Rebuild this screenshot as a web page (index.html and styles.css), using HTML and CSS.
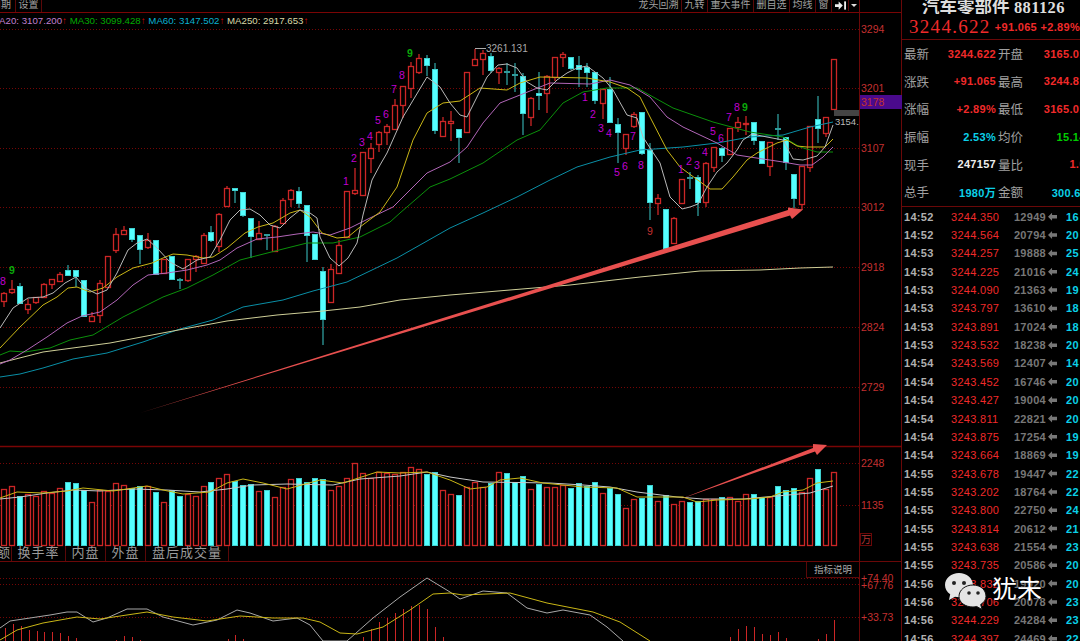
FILE: index.html
```html
<!DOCTYPE html>
<html lang="zh-CN">
<head>
    <meta charset="UTF-8">
    <title>汽车零部件 881126</title>
    <link rel="stylesheet" href="styles.css">
</head>
<body>

<div class="app">
    <div class="chart">
        <div class="toolbar">
            <div class="tool-group">
                <span class="tool tool-cut">周期</span>
                <span class="tool">设置</span>
            </div>
            <div class="tool-group">
                <span class="tool">龙头回溯</span>
                <span class="tool">九转</span>
                <span class="tool">重大事件</span>
                <span class="tool">删自选</span>
                <span class="tool">均线</span>
                <span class="tool">窗</span>
                <span class="tool tool-icon">
                    <svg width="12" height="9" viewBox="0 0 12 9"><path d="M0 3h4V0l4.500 4.500L4 9V6H0z" fill="#eee"/><rect x="10" y="0" width="2" height="9" fill="#eee"/></svg>
                </span>
                <span class="tool tool-icon tool-drop"><i class="drop-arrow"></i></span>
            </div>
        </div>

        <svg id="pricePane" class="pane pane-price" viewBox="0 13 902 433"></svg>
        <svg id="volumePane" class="pane pane-volume" viewBox="0 447 902 99"></svg>

        <div class="tabs">
            <span class="tab tab-cut">成交额</span>
            <span class="tab tab-turnover">换手率</span>
            <span class="tab">内盘</span>
            <span class="tab">外盘</span>
            <span class="tab tab-after">盘后成交量</span>
        </div>

        <svg id="macdPane" class="pane pane-macd" viewBox="0 562 902 79"></svg>

        <div class="unit-box">万</div>
        <div class="explain-box">指标说明</div>
        <div class="axis-rule"></div>
    </div>

    <div class="quote">
        <div class="quote-title">汽车零部件 <b>881126</b></div>
        <div class="quote-head">
            <span class="head-price">3244.622</span>
            <span class="head-change">+91.065</span>
            <span class="head-pct">+2.89%</span>
        </div>
        <div class="quote-grid">
            <div class="quote-row"><span class="label">最新</span><span class="val red">3244.622</span><span class="label">开盘</span><span class="val red">3165.012</span></div>
            <div class="quote-row"><span class="label">涨跌</span><span class="val red">+91.065</span><span class="label">最高</span><span class="val red">3244.812</span></div>
            <div class="quote-row"><span class="label">涨幅</span><span class="val red">+2.89%</span><span class="label">最低</span><span class="val red">3165.012</span></div>
            <div class="quote-row"><span class="label">振幅</span><span class="val cyan">2.53%</span><span class="label">均价</span><span class="val green">15.142</span></div>
            <div class="quote-row"><span class="label">现手</span><span class="val white">247157</span><span class="label">量比</span><span class="val red">1.08</span></div>
            <div class="quote-row"><span class="label">总手</span><span class="val cyan">1980万</span><span class="label">金额</span><span class="val cyan">300.6亿</span></div>
        </div>
        <div id="ticks" class="ticks"></div>
    </div>
</div>

<div class="watermark">
    <svg class="wm-logo" width="44" height="38" viewBox="0 0 44 38">
        <path d="M15 1C7.300 1 1 6.300 1 13c0 3.800 2 7 5.200 9.300L5 28l6-3.200c1.300.3 2.600.5 4 .5 7.700 0 14-5.500 14-12.200S22.700 1 15 1z" fill="#e4e4e4"/>
        <circle cx="10" cy="11" r="2" fill="#222"/>
        <circle cx="20" cy="11" r="2" fill="#222"/>
        <path d="M29 13c-7.700 0-14 5-14 11.300S21.300 35 29 35c1.300 0 2.500-.2 3.700-.5l5.300 3-1.300-5c3.300-2 5.300-4.800 5.300-8.200C42 18 36.700 13 29 13z" fill="#e4e4e4" stroke="#111" stroke-width="1"/>
        <circle cx="25" cy="21" r="1.800" fill="#222"/>
        <circle cx="34" cy="21" r="1.800" fill="#222"/>
    </svg>
    <span class="wm-name">犹未</span>
</div>

<script src="app.js"></script>
</body>
</html>
```

FILE: styles.css
```css
* {
    box-sizing: border-box;
}

html, body {
    margin: 0;
    height: 100%;
    overflow: hidden;
    background: #000;
}

body {
    position: relative;
    font-family: "Liberation Sans", "Noto Sans CJK SC", sans-serif;
    color: #999;
}

.app {
    display: flex;
    width: 1080px;
    height: 641px;
}

.chart {
    position: relative;
    display: flex;
    flex-direction: column;
    width: 901px;
    flex-shrink: 0;
}

.toolbar {
    display: flex;
    justify-content: space-between;
    height: 13px;
    padding-right: 42px;
    border-bottom: 1px solid #7a0505;
    overflow: hidden;
}

.tool-group {
    display: flex;
}

.tool {
    padding: 0 2.5px;
    border-right: 1px solid #5a0808;
    font-size: 10px;
    line-height: 10px;
    color: #a0a0a0;
}

.tool-cut {
    width: 16px;
    padding: 0 4px 0 0;
    direction: rtl;
    overflow: hidden;
    white-space: nowrap;
}

.tool-icon {
    display: flex;
    align-items: center;
    width: 17px;
    height: 11px;
}

.tool-drop {
    width: 10px;
    padding: 0 2px;
    border-right: 0;
}

.drop-arrow {
    width: 0;
    height: 0;
    border-left: 3px solid transparent;
    border-right: 3px solid transparent;
    border-top: 3px solid #ddd;
}

.pane {
    display: block;
    width: 902px;
    flex-shrink: 0;
    overflow: visible;
    font-family: "Liberation Sans", sans-serif;
}

.pane-price {
    height: 433px;
}

.pane-volume {
    height: 99px;
    margin-top: 1px;
}

.pane-macd {
    height: 79px;
}

.tabs {
    display: flex;
    height: 16px;
    border-bottom: 1px solid #6a0808;
    overflow: hidden;
}

.tab {
    width: 40px;
    border-right: 1px solid #5a0808;
    font-size: 13px;
    line-height: 14px;
    letter-spacing: 1px;
    text-align: center;
    color: #9a9a9a;
}

.tab-cut {
    width: 12px;
    direction: rtl;
    white-space: nowrap;
    text-align: right;
}

.tab-turnover {
    width: 54px;
}

.tab-after {
    width: 83px;
}

.unit-box {
    position: absolute;
    left: 860px;
    top: 533px;
    width: 12px;
    height: 13px;
    border: 1px solid #6a0808;
    font-size: 10px;
    line-height: 11px;
    text-align: center;
    color: #b03030;
}

.explain-box {
    position: absolute;
    left: 806px;
    top: 562px;
    width: 54px;
    height: 16px;
    border: 1px solid #5a0808;
    border-top: 0;
    font-size: 9.500px;
    line-height: 15px;
    text-align: center;
    color: #aaa;
}

.axis-rule {
    position: absolute;
    left: 859px;
    top: 0;
    bottom: 0;
    width: 1px;
    background: #6a0808;
}

.quote {
    flex: 1;
    min-width: 0;
    border-left: 1px solid #6a0808;
    overflow: hidden;
}

.quote-title {
    height: 14px;
    padding-left: 20px;
    font-family: "Liberation Serif", "Noto Sans CJK SC", serif;
    font-size: 17.500px;
    font-weight: bold;
    line-height: 14px;
    color: #ddd;
    white-space: nowrap;
    overflow: hidden;
}

.quote-title b {
    font-size: 16.500px;
    letter-spacing: 0.400px;
}

.quote-head {
    display: flex;
    align-items: center;
    height: 26px;
    padding-left: 7px;
    border-bottom: 1px solid #6a0808;
    white-space: nowrap;
    color: #f02a2a;
}

.head-price {
    width: 92px;
    font-family: "Liberation Serif", serif;
    font-size: 19px;
    letter-spacing: 1.300px;
}

.head-change {
    width: 49px;
    font-size: 11px;
    font-weight: bold;
    letter-spacing: 0.300px;
}

.head-pct {
    font-size: 11px;
    font-weight: bold;
    letter-spacing: 0.300px;
}

.quote-grid {
    width: 192px;
    border-bottom: 1px solid #6a0808;
    padding-left: 2px;
}

.quote-row {
    display: grid;
    grid-template-columns: 26px 66px 26px 70px;
    align-items: center;
    height: 27.600px;
    white-space: nowrap;
}

.label {
    font-size: 12.500px;
    color: #a0a0a0;
}

.quote-row .label:nth-child(3) {
    margin-left: 2px;
}

.val {
    font-size: 11px;
    font-weight: bold;
    letter-spacing: 0.300px;
    text-align: right;
}

.red {
    color: #f02a2a;
}

.cyan {
    color: #0bd0e8;
}

.green {
    color: #0c0;
}

.white {
    color: #eee;
}

.ticks {
    padding: 1px 0 0 2px;
    width: 190px;
}

.tick {
    display: grid;
    grid-template-columns: 47px 47px 48px 20px 20px;
    align-items: center;
    height: 18.350px;
    font-size: 11px;
    letter-spacing: 0.300px;
    white-space: nowrap;
}

.tick-time {
    font-weight: bold;
    color: #b0b0b0;
}

.tick-price {
    color: #f02a2a;
}

.tick-vol {
    text-align: right;
    color: #777;
    font-weight: bold;
}

.tick-arrow {
    width: 9px;
    height: 8px;
    margin-left: 2px;
    background: #777;
    clip-path: polygon(0 50%, 45% 0, 45% 28%, 100% 28%, 100% 72%, 45% 72%, 45% 100%);
}

.tick-count {
    color: #0bd0e8;
    font-weight: bold;
}

.watermark {
    position: absolute;
    left: 944px;
    top: 572px;
    display: flex;
    align-items: flex-start;
    gap: 4px;
}

.wm-name {
    margin-top: 2px;
    font-size: 25px;
    line-height: 30px;
    color: #fff;
    text-shadow: 0 0 2px #000;
}
```

FILE: app.js
```js
var NS = 'http://www.w3.org/2000/svg';

var RED = '#cc2626';
var CYAN = '#55ffff';
var TEAL = '#2f9c9c';

// x of a bar by its index, 105 bars across the chart
function barX(k) {
    return Math.round(4 + 7.98 * k);
}

// [type, body top, body bottom, wick top, wick bottom], all in screen pixels
var candles = [
    ['r',293,301,292,307],['r',289,292,280,294],['c',286,303,283,303],['r',304,309,299,314],['r',297,302,297,304],
    ['r',284,297,283,298],['r',279,284,279,289],['r',274,281,272,282],['c',270,275,265,275],['c',270,276,270,287],
    ['c',280,316,280,316],['r',316,321,312,322],['r',283,315,280,323],['r',256,287,256,287],['r',234,250,228,253],
    ['r',230,234,226,235],['c',228,239,228,242],['c',235,249,235,264],['r',240,247,233,249],['c',240,274,240,274],
    ['r',259,273,259,273],['c',256,279,256,279],['c',279,280,278,289],['r',259,280,259,282],['r',256,259,255,272],
    ['r',235,263,233,263],['c',232,240,226,242],['r',214,246,213,252],['r',188,206,186,207],['c',188,190,188,203],
    ['c',192,215,192,217],['c',218,236,218,258],['r',233,239,221,240],['c',234,235,234,250],['r',226,251,225,252],
    ['r',200,223,198,224],['r',190,199,189,207],['c',191,203,187,208],['c',205,235,205,262],['c',234,259,234,259],
    ['c',271,319,267,345],['r',269,302,264,302],['r',245,273,240,273],['r',191,237,191,237],['r',190,193,168,195],
    ['r',152,195,152,195],['r',148,158,143,173],['r',132,144,131,152],['r',126,132,124,145],['r',105,129,99,130],
    ['r',86,105,86,118],['r',66,88,62,98],['r',58,72,54,74],['c',58,65,55,76],['c',69,130,63,134],
    ['r',121,136,117,137],['r',121,123,111,141],['c',129,137,129,163],['r',72,132,72,132],['r',59,65,49,66],
    ['r',53,59,50,75],['c',56,70,53,73],['r',68,72,67,84],['c',71,72,63,85],['c',74,75,63,92],
    ['c',76,113,73,135],['r',98,117,97,126],['c',93,95,72,110],['r',76,93,75,113],['r',57,77,57,81],
    ['r',54,57,52,67],['c',57,68,57,70],['c',65,69,56,87],['c',67,72,63,87],['c',72,100,72,104],
    ['r',89,103,89,119],['c',89,122,77,123],['c',124,132,118,163],['r',134,148,134,155],['r',114,126,112,128],
    ['c',112,153,112,155],['c',150,202,143,220],['r',198,203,194,215],['c',209,248,209,248],['r',218,243,217,243],
    ['r',179,203,179,203],['c',177,178,172,189],['c',177,202,175,216],['r',163,202,162,207],['r',147,167,147,172],
    ['c',148,155,147,162],['r',128,154,128,154],['r',122,127,117,132],['r',123,124,116,135],['c',122,140,122,145],
    ['c',141,163,141,163],['r',142,166,142,176],['c',128,129,114,140],['c',137,162,137,170],['c',174,198,174,208],
    ['r',166,204,166,210],['r',126,167,126,172],['c',119,128,96,143],['r',117,133,117,137],['r',59,109,59,109]
];

// top of each volume bar, colour comes from the candle with the same index
var volumeTops = [
    489,486,496,494,496,491,493,488,482,483,490,502,490,491,483,485,488,486,486,492,
    502,490,496,494,496,486,482,478,474,481,485,484,491,490,497,487,479,478,482,478,
    479,490,486,478,463,473,478,472,473,474,472,467,469,474,472,490,494,495,487,482,
    487,483,472,473,482,476,489,484,487,487,485,488,483,486,482,493,488,494,508,499,
    498,485,501,495,504,501,502,501,499,499,497,497,501,494,494,497,497,486,490,488,
    492,478,469,489,472
];

var priceLines = [
    { color: '#0a8fa6', pts: '0,377 20,374 43,368 73,359 107,353 143,342 180,329 213,320 243,307 283,300 313,291 347,282 397,258 450,228 483,213 517,197 550,180 577,167 610,157 640,150 683,147 717,143 750,137 783,135 810,127 833,122' },
    { color: '#cfcf98', pts: '0,363 43,352 110,343 173,331 227,321 277,315 323,311 360,307 400,300 450,295 510,290 570,285 640,277 700,271 760,270 800,268 833,267' },
    { color: '#0b900b', pts: '0,355 10,351 25,352 50,348 70,340 93,335 123,317 163,297 187,288 213,275 240,260 287,248 307,243 333,243 360,237 390,222 400,213 430,187 450,179 483,163 517,140 540,130 563,103 583,92 607,88 637,88 673,108 713,122 750,132 783,137 800,147 817,152 833,152' },
    { color: '#b266b8', pts: '0,364 10,360 27,350 47,337 67,323 82,316 100,312 117,300 133,285 148,275 167,273 187,270 207,265 220,260 237,248 257,239 277,237 297,234 313,232 330,235 350,228 370,218 393,207 410,190 427,173 450,162 467,147 483,123 500,103 520,95 550,83 590,84 610,80 630,85 650,97 667,117 683,127 717,143 737,155 763,159 783,162 800,165 812,165 823,157 833,147' },
    { color: '#c9b616', pts: '0,348 20,327 43,305 57,297 68,288 77,287 90,292 103,288 117,277 133,268 152,263 163,258 173,254 187,255 203,258 213,257 227,248 245,233 258,227 273,223 290,213 300,210 310,217 322,233 337,238 348,237 360,227 380,212 397,187 413,140 427,113 443,103 460,101 480,88 507,90 520,83 540,77 587,78 610,82 627,88 640,97 650,117 667,150 680,167 710,189 722,189 733,177 747,160 757,153 777,143 787,140 797,146 807,147 825,147 833,139' },
    { color: '#b8b8b8', pts: '0,328 13,308 28,298 43,297 53,293 65,283 76,277 85,288 97,294 107,290 117,273 128,250 137,243 147,239 157,248 170,262 183,269 197,260 210,257 220,240 230,220 240,210 250,209 260,215 270,225 280,228 290,218 300,210 310,213 317,218 320,237 330,258 339,266 348,258 357,243 363,215 372,180 380,165 387,153 403,117 415,97 427,77 440,87 450,103 460,115 467,117 477,97 487,77 498,65 507,64 517,68 527,82 537,88 547,90 557,80 567,73 577,68 587,66 595,72 603,78 613,90 627,115 637,118 643,137 650,148 660,163 670,197 682,209 690,207 698,204 707,187 717,172 727,163 737,150 743,140 752,134 767,137 783,140 793,159 803,160 817,156 825,147 833,125' }
];

var volumeLines = [
    { color: '#c8c8c8', pts: '0,499 20,497 47,493 73,490 100,491 133,489 167,490 200,492 227,489 253,485 287,484 333,485 360,479 400,476 427,472 450,477 483,482 550,483 583,485 610,487 637,492 677,497 703,499 743,499 777,496 810,493 833,486' },
    { color: '#c9b616', pts: '0,498 17,492 43,493 67,491 83,488 113,491 147,486 163,490 183,494 210,492 227,483 243,479 263,483 287,489 320,480 343,483 377,472 400,473 427,472 450,480 470,489 487,487 500,480 520,478 543,483 583,487 617,488 637,497 663,497 683,497 697,502 717,500 750,499 770,497 783,492 803,490 817,483 833,481' }
];

var macdLines = [
    { color: '#a8a8a8', pts: '0,628 10,621 30,618 50,615 67,612 77,612 93,622 107,618 127,609 147,609 163,617 193,625 217,620 237,610 250,613 273,621 297,618 310,625 323,641 347,641 373,618 400,597 427,578 450,592 460,599 483,591 507,593 527,608 547,613 563,610 590,615 607,627 623,641' },
    { color: '#c9b616', pts: '0,640 17,630 43,623 77,617 100,619 147,612 173,617 207,621 240,616 273,618 303,618 320,622 340,633 357,634 383,627 410,610 433,594 450,593 463,595 510,593 547,603 593,612 620,622 650,641' }
];

// [x, top] of the histogram bars in the lower pane
var macdBars = [
    [5,628],[13,624],[21,626],[29,630],[37,631],[44,632],[52,632],[60,633],[68,636],[76,638],
    [116,640],[124,636],[132,637],[140,640],[228,639],[235,635],[243,639],[363,637],[371,629],
    [379,622],[387,618],[395,613],[403,609],[411,606],[419,605],[427,609],[435,627],[443,637],
    [730,637],[738,629],[746,626],[754,627],[762,634],[770,635],[778,632],[786,638],[818,639],[826,634],[834,620]
];

var counts = [
    ['1',346,181],['2',354,158],['3',362,142],['4',370,136],['5',378,120],['6',386,114],['7',394,89],['8',402,75],
    ['8',3,281],
    ['1',585,97],['2',593,114],['3',601,128],['4',609,133],['5',617,172],['6',625,166],['7',633,136],['8',641,165],
    ['1',681,169],['2',689,161],['3',697,165],['4',705,152],['5',713,131],['6',721,138],['7',729,117],['8',737,107]
];
var nines = [[410,53],[12,270],[745,107]];

var ticks = [
    ['14:52','3244.350','12949','16'],['14:52','3244.564','20794','20'],['14:53','3244.257','19888','25'],
    ['14:53','3244.225','21016','24'],['14:53','3244.090','21363','19'],['14:53','3243.797','13610','18'],
    ['14:53','3243.891','17024','18'],['14:53','3243.532','18238','20'],['14:54','3243.569','12407','14'],
    ['14:54','3243.452','16746','20'],['14:54','3243.427','19004','20'],['14:54','3243.811','22821','20'],
    ['14:54','3243.875','17254','19'],['14:54','3243.664','18869','19'],['14:55','3243.678','19447','22'],
    ['14:55','3243.202','18764','22'],['14:55','3243.800','22750','24'],['14:55','3243.814','20612','21'],
    ['14:55','3243.638','21554','23'],['14:55','3243.735','20586','20'],['14:56','3243.832','19920','20'],
    ['14:56','3243.706','20078','23'],['14:56','3244.229','24284','23'],['14:56','3244.397','24469','22']
];

function el(parent, name, attrs, text) {
    var node = document.createElementNS(NS, name);
    for (var key in attrs) {
        node.setAttribute(key, attrs[key]);
    }
    if (text !== undefined) {
        node.textContent = text;
    }
    parent.appendChild(node);
    return node;
}

function gridLine(svg, y) {
    el(svg, 'line', { x1: 0, x2: 859, y1: y + 0.5, y2: y + 0.5, stroke: '#740606', 'stroke-width': 1, 'stroke-dasharray': '1 2' });
}

function axisLabel(svg, y, text) {
    el(svg, 'text', { x: 861, y: y + 4, 'font-size': 10.5, fill: '#c43030' }, text);
}

function drawLines(svg, lines) {
    lines.forEach(function(line) {
        el(svg, 'polyline', { points: line.pts, fill: 'none', stroke: line.color, 'stroke-width': 1, 'stroke-linejoin': 'round' });
    });
}

// 6px outer width, the heavier stroke gives the soft look of the screenshot
function drawCandle(svg, c, k) {
    var x = barX(k);
    var red = c[0] === 'r';
    el(svg, 'line', { x1: x, x2: x, y1: c[3], y2: c[4], stroke: red ? RED : TEAL, 'stroke-width': 1.3 });
    el(svg, 'rect', {
        x: x - 2.5, y: c[1] + 0.5, width: 5, height: c[2] - c[1],
        fill: red ? '#000' : CYAN,
        stroke: red ? RED : (c[2] - c[1] > 1 ? '#3fd0d0' : TEAL),
        'stroke-width': red ? 1.3 : 1
    });
}

// price pane
var price = document.getElementById('pricePane');
[29, 88, 148, 207, 267, 327, 387].forEach(function(y) {
    gridLine(price, y);
});
candles.forEach(function(c, k) {
    drawCandle(price, c, k);
});
drawLines(price, priceLines);

counts.forEach(function(n) {
    el(price, 'text', { x: n[1], y: n[2] + 4, 'font-size': 10.5, 'text-anchor': 'middle', fill: '#c000d0' }, n[0]);
});
nines.forEach(function(n) {
    el(price, 'text', { x: n[0], y: n[1] + 4, 'font-size': 10.5, 'font-weight': 'bold', 'text-anchor': 'middle', fill: '#0aa80a' }, '9');
});
el(price, 'text', { x: 650, y: 235, 'font-size': 10.5, 'text-anchor': 'middle', fill: '#c43030' }, '9');

var legend = el(price, 'text', { x: -9, y: 24, 'font-size': 9.7 });
[
    ['MA20: 3107.200', '#c080d0'],
    ['↑', '#c00'],
    [' MA30: 3099.428', '#0a0'],
    ['↑', '#c00'],
    [' MA60: 3147.502', '#0ab0d0'],
    ['↑', '#c00'],
    [' MA250: 2917.653', '#d8d8a8'],
    ['↑', '#c00']
].forEach(function(part) {
    el(legend, 'tspan', { fill: part[1] }, part[0] + (part[0] === '↑' ? ' ' : ''));
});

el(price, 'line', { x1: 475, x2: 486, y1: 48.5, y2: 48.5, stroke: '#aaa' });
el(price, 'text', { x: 486, y: 52, 'font-size': 10, fill: '#aaa' }, '3261.131');

[[3294, 29], [3201, 88], [3107, 148], [3012, 207], [2918, 267], [2824, 327], [2729, 387]].forEach(function(a) {
    axisLabel(price, a[1], a[0]);
});

el(price, 'rect', { x: 860, y: 95, width: 42, height: 14, fill: '#4a0a8c' });
axisLabel(price, 102, '3178');
el(price, 'rect', { x: 834, y: 110, width: 25, height: 6, fill: '#444' });
el(price, 'text', { x: 835, y: 125, 'font-size': 9.5, fill: '#bbb' }, '3154.');

// the hand drawn trend arrow
el(price, 'polygon', { points: '140,413 788,210 788,207.500 803,209.500 792,219 790,215.500', fill: '#e8504f' });

// volume pane
var volume = document.getElementById('volumePane');
gridLine(volume, 463);
gridLine(volume, 505);
el(volume, 'line', { x1: 0, x2: 902, y1: 446.5, y2: 446.5, stroke: '#7a0505', 'stroke-width': 1.5 });
volumeTops.forEach(function(top, k) {
    var x = barX(k);
    var red = candles[k][0] === 'r';
    el(volume, 'rect', {
        x: x - 2.5, y: top + 0.5, width: 5, height: 545 - top,
        fill: red ? '#000' : CYAN,
        stroke: red ? RED : '#3fd0d0',
        'stroke-width': red ? 1.3 : 1
    });
});
drawLines(volume, volumeLines);
el(volume, 'polygon', { points: '678,500 813,448 813,444 827,445 817,455 815,451.500', fill: '#e8504f' });
axisLabel(volume, 463, '2248');
axisLabel(volume, 505, '1135');

// lower indicator pane
var macd = document.getElementById('macdPane');
[578, 584, 617].forEach(function(y) {
    gridLine(macd, y);
});
macdBars.forEach(function(b) {
    el(macd, 'line', { x1: b[0] + 0.5, x2: b[0] + 0.5, y1: b[1], y2: 641, stroke: RED });
});
drawLines(macd, macdLines);
axisLabel(macd, 578, '+74.40');
axisLabel(macd, 585, '+67.76');
axisLabel(macd, 617, '+33.73');

// tick list on the right
var tickBox = document.getElementById('ticks');
ticks.forEach(function(t) {
    var row = document.createElement('div');
    row.className = 'tick';
    row.innerHTML = '<span class="tick-time">' + t[0] + '</span>' +
        '<span class="tick-price">' + t[1] + '</span>' +
        '<span class="tick-vol">' + t[2] + '</span>' +
        '<span class="tick-arrow"></span>' +
        '<span class="tick-count">' + t[3] + '</span>';
    tickBox.appendChild(row);
});
```
